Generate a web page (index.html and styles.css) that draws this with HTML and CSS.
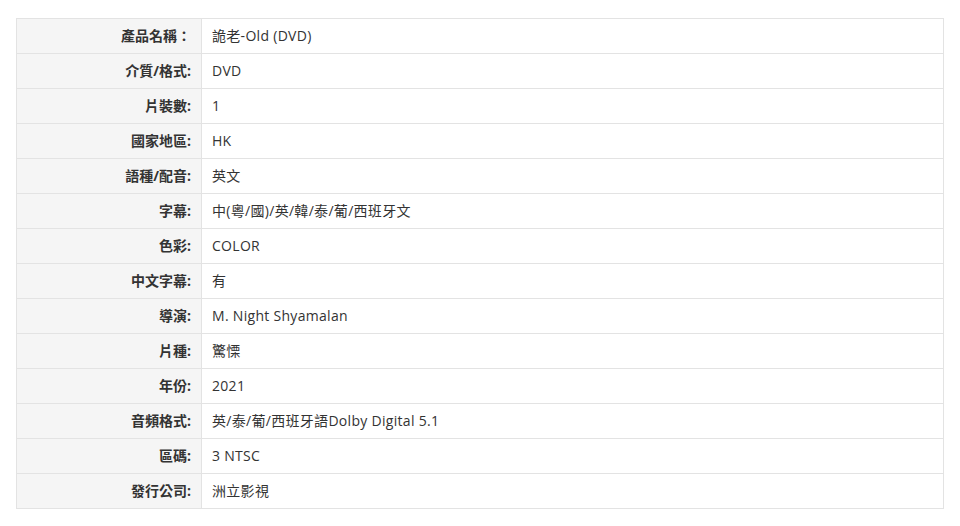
FILE: index.html
```html
<!DOCTYPE html>
<html lang="zh-Hant">
<head>
<meta charset="utf-8">
<title>商品資料</title>
<link rel="stylesheet" href="styles.css">
</head>
<body>
<div class="page">
<table class="spec">
<tbody>
<tr><th>產品名稱：</th><td>詭老-Old (DVD)</td></tr>
<tr><th>介質/格式:</th><td>DVD</td></tr>
<tr><th>片裝數:</th><td>1</td></tr>
<tr><th>國家地區:</th><td>HK</td></tr>
<tr><th>語種/配音:</th><td>英文</td></tr>
<tr><th>字幕:</th><td>中(粵/國)/英/韓/泰/葡/西班牙文</td></tr>
<tr><th>色彩:</th><td>COLOR</td></tr>
<tr><th>中文字幕:</th><td>有</td></tr>
<tr><th>導演:</th><td>M. Night Shyamalan</td></tr>
<tr><th>片種:</th><td>驚慄</td></tr>
<tr><th>年份:</th><td>2021</td></tr>
<tr><th>音頻格式:</th><td>英/泰/葡/西班牙語Dolby Digital 5.1</td></tr>
<tr><th>區碼:</th><td>3 NTSC</td></tr>
<tr><th>發行公司:</th><td>洲立影視</td></tr>
</tbody>
</table>
</div>
</body>
</html>
```
FILE: styles.css
```css
html, body {
  margin: 0;
  padding: 0;
  background: #ffffff;
}
.page {
  padding: 18px 16px 0 16px;
}
.spec {
  width: 928px;
  border-collapse: collapse;
  font-family: "Open Sans", "Noto Sans CJK TC", sans-serif;
  font-size: 14px;
  color: #333333;
}
.spec th,
.spec td {
  border: 1px solid #e3e3e3;
  height: 20px;
  line-height: 20px;
  padding: 7px 10px;
  vertical-align: middle;
}
.spec th {
  width: 164px;
  background: #f5f5f5;
  text-align: right;
  font-weight: bold;
  color: #333333;
}
.spec td {
  text-align: left;
  font-weight: normal;
  letter-spacing: 0.3px;
}
```
